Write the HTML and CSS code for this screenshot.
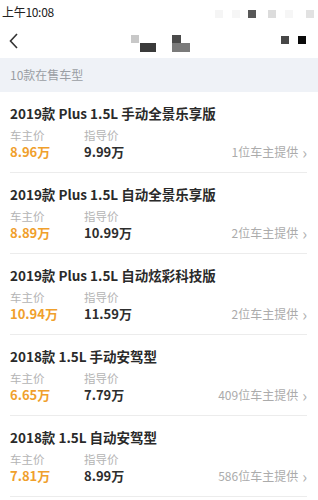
FILE: index.html
```html
<!DOCTYPE html>
<html lang="zh-CN">
<head>
<meta charset="utf-8">
<link rel="stylesheet" href="styles.css">
</head>
<body>
<div class="status">
  <span class="time">上午10:08</span>
  <span class="px p1"></span>
  <span class="px p2"></span>
  <span class="px p3"></span>
  <span class="px p4"></span>
  <span class="px p5"></span>
  <span class="px p6"></span>
</div>
<div class="nav">
  <svg class="back" width="12" height="18" viewBox="0 0 12 18"><path d="M9 2 L2.5 9 L9 16" fill="none" stroke="#333" stroke-width="1.6"/></svg>
  <span class="px n1"></span>
  <span class="px n2"></span>
  <span class="px n3"></span>
  <span class="px n4"></span>
  <span class="px n5"></span>
  <span class="px n6"></span>
</div>
<div class="section">10款在售车型</div>
<ul class="list">
  <li class="item">
    <div class="title">2019款 Plus 1.5L 手动全景乐享版</div>
    <div class="row">
      <div class="col"><div class="lab">车主价</div><div class="price own">8.96万</div></div>
      <div class="col"><div class="lab">指导价</div><div class="price">9.99万</div></div>
      <div class="src">1位车主提供<span class="chev">›</span></div>
    </div>
  </li>
  <li class="item">
    <div class="title">2019款 Plus 1.5L 自动全景乐享版</div>
    <div class="row">
      <div class="col"><div class="lab">车主价</div><div class="price own">8.89万</div></div>
      <div class="col"><div class="lab">指导价</div><div class="price">10.99万</div></div>
      <div class="src">2位车主提供<span class="chev">›</span></div>
    </div>
  </li>
  <li class="item">
    <div class="title">2019款 Plus 1.5L 自动炫彩科技版</div>
    <div class="row">
      <div class="col"><div class="lab">车主价</div><div class="price own">10.94万</div></div>
      <div class="col"><div class="lab">指导价</div><div class="price">11.59万</div></div>
      <div class="src">2位车主提供<span class="chev">›</span></div>
    </div>
  </li>
  <li class="item">
    <div class="title">2018款 1.5L 手动安驾型</div>
    <div class="row">
      <div class="col"><div class="lab">车主价</div><div class="price own">6.65万</div></div>
      <div class="col"><div class="lab">指导价</div><div class="price">7.79万</div></div>
      <div class="src">409位车主提供<span class="chev">›</span></div>
    </div>
  </li>
  <li class="item">
    <div class="title">2018款 1.5L 自动安驾型</div>
    <div class="row">
      <div class="col"><div class="lab">车主价</div><div class="price own">7.81万</div></div>
      <div class="col"><div class="lab">指导价</div><div class="price">8.99万</div></div>
      <div class="src">586位车主提供<span class="chev">›</span></div>
    </div>
  </li>
</ul>
</body>
</html>
```

FILE: styles.css
```css
* { box-sizing: border-box; }
html, body {
  margin: 0;
  padding: 0;
  background: #fff;
  font-family: "Noto Sans CJK SC", "Noto Sans", sans-serif;
  color: #333;
  overflow: hidden;
}
.status {
  position: relative;
  height: 25px;
}
.time {
  position: absolute;
  left: 2px;
  top: 4px;
  font-size: 12px;
  line-height: 16px;
  color: #222;
  letter-spacing: -0.3px;
}
.px {
  position: absolute;
  display: block;
  width: 8px;
  height: 8px;
}
.p1 { left: 215px; top: 10px; background: #f5f5f5; }
.p2 { left: 232px; top: 10px; background: #f6f6f6; }
.p3 { left: 248px; top: 10px; background: #585858; }
.p4 { left: 268px; top: 10px; background: #dcdcdc; }
.p5 { left: 285px; top: 10px; background: #f6f6f6; }
.p6 { left: 306px; top: 10px; background: #e2e2e2; }
.nav {
  position: relative;
  height: 33px;
}
.back {
  position: absolute;
  left: 8px;
  top: 7px;
}
.n1 { left: 131px; top: 10px; background: #c8c8c8; }
.n2 { left: 140px; top: 18px; width: 16px; height: 9px; background: #3a3a3a; }
.n3 { left: 172px; top: 10px; width: 9px; background: #4a4a4a; }
.n4 { left: 172px; top: 18px; width: 18px; height: 9px; background: #7a7a7a; }
.n5 { left: 281px; top: 11px; background: #474747; }
.n6 { left: 298px; top: 11px; background: #0a0a0a; }
.section {
  height: 34px;
  background: #eff2f7;
  font-size: 12px;
  line-height: 34px;
  padding-left: 10px;
  color: #9a9ea4;
}
.list {
  list-style: none;
  margin: 0;
  padding: 0 11px 0 10px;
}
.item {
  padding: 11px 0 11px;
  border-bottom: 1px solid #ececec;
}
.title {
  font-size: 13.5px;
  line-height: 20px;
  font-weight: 700;
  color: #2a2a2a;
  white-space: nowrap;
}
.row {
  display: flex;
  align-items: flex-end;
  margin-top: 4px;
}
.col {
  width: 74px;
}
.lab {
  font-size: 11.5px;
  line-height: 16px;
  color: #b4b4b4;
}
.price {
  font-size: 13px;
  line-height: 18px;
  font-weight: 700;
  color: #2e2e2e;
}
.price.own {
  color: #f0a02c;
}
.src {
  margin-left: auto;
  font-size: 12px;
  line-height: 18px;
  color: #ababab;
  display: flex;
  align-items: center;
}
.chev {
  margin-left: 4px;
  font-size: 16px;
  line-height: 18px;
  color: #b0b0b0;
}
```
